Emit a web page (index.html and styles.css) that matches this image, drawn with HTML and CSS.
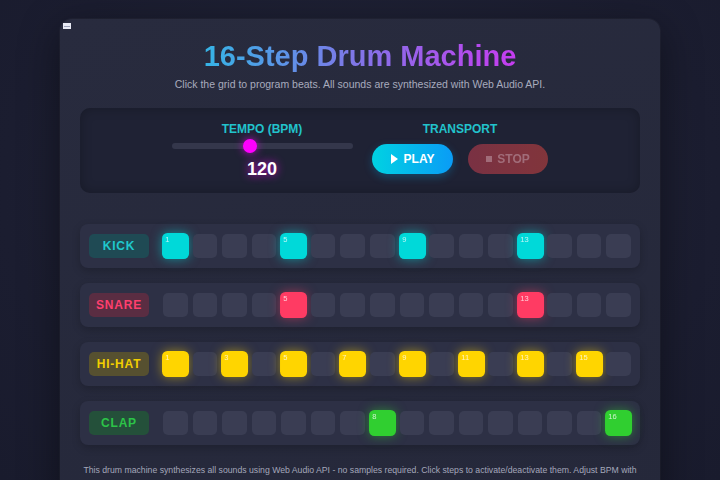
FILE: index.html
```html
<!DOCTYPE html>
<html>
<head>
<meta charset="utf-8">
<title>16-Step Drum Machine</title>
<link rel="stylesheet" href="styles.css">
</head>
<body>
<div class="card">
  <svg class="corner-icon" width="8" height="6" viewBox="0 0 8 6"><rect x="0" y="0" width="8" height="6" fill="#e8eaf4"/><rect x="1" y="3" width="6" height="1" fill="#9aa0b8"/></svg>
  <h1 class="title">16-Step Drum Machine</h1>
  <p class="subtitle">Click the grid to program beats. All sounds are synthesized with Web Audio API.</p>

  <div class="controls">
    <div class="group tempo">
      <div class="group-label">TEMPO (BPM)</div>
      <div class="slider"><div class="track"></div><div class="thumb"></div></div>
      <div class="bpm">120</div>
    </div>
    <div class="group transport">
      <div class="group-label">TRANSPORT</div>
      <div class="buttons">
        <button class="btn play"><span class="tri"></span>PLAY</button>
        <button class="btn stop"><span class="sq"></span>STOP</button>
      </div>
    </div>
  </div>

  <div class="tracks">
    <div class="track-row kick">
      <div class="label">KICK</div>
      <div class="steps">
        <div class="step on"><span>1</span></div><div class="step"></div><div class="step"></div><div class="step"></div>
        <div class="step on"><span>5</span></div><div class="step"></div><div class="step"></div><div class="step"></div>
        <div class="step on"><span>9</span></div><div class="step"></div><div class="step"></div><div class="step"></div>
        <div class="step on"><span>13</span></div><div class="step"></div><div class="step"></div><div class="step"></div>
      </div>
    </div>
    <div class="track-row snare">
      <div class="label">SNARE</div>
      <div class="steps">
        <div class="step"></div><div class="step"></div><div class="step"></div><div class="step"></div>
        <div class="step on"><span>5</span></div><div class="step"></div><div class="step"></div><div class="step"></div>
        <div class="step"></div><div class="step"></div><div class="step"></div><div class="step"></div>
        <div class="step on"><span>13</span></div><div class="step"></div><div class="step"></div><div class="step"></div>
      </div>
    </div>
    <div class="track-row hihat">
      <div class="label">HI-HAT</div>
      <div class="steps">
        <div class="step on"><span>1</span></div><div class="step"></div><div class="step on"><span>3</span></div><div class="step"></div>
        <div class="step on"><span>5</span></div><div class="step"></div><div class="step on"><span>7</span></div><div class="step"></div>
        <div class="step on"><span>9</span></div><div class="step"></div><div class="step on"><span>11</span></div><div class="step"></div>
        <div class="step on"><span>13</span></div><div class="step"></div><div class="step on"><span>15</span></div><div class="step"></div>
      </div>
    </div>
    <div class="track-row clap">
      <div class="label">CLAP</div>
      <div class="steps">
        <div class="step"></div><div class="step"></div><div class="step"></div><div class="step"></div>
        <div class="step"></div><div class="step"></div><div class="step"></div><div class="step on"><span>8</span></div>
        <div class="step"></div><div class="step"></div><div class="step"></div><div class="step"></div>
        <div class="step"></div><div class="step"></div><div class="step"></div><div class="step on"><span>16</span></div>
      </div>
    </div>
  </div>

  <p class="info">This drum machine synthesizes all sounds using Web Audio API - no samples required. Click steps to activate/deactivate them. Adjust BPM with the slider. Press Play to start the sequencer.</p>
</div>
</body>
</html>
```
FILE: styles.css
```css
* { box-sizing: border-box; }
html, body { margin: 0; padding: 0; }
body {
  background: radial-gradient(ellipse at 50% 40%, #222539 0%, #1b1d30 70%, #191b2d 100%);
  font-family: "Liberation Sans", Arial, sans-serif;
  color: #e0e2ee;
  height: 480px;
  overflow: hidden;
}
.card {
  position: relative;
  width: 600px;
  margin: 19px auto 0;
  padding: 20px 20px 20px;
  background: linear-gradient(160deg, #282b3e 0%, #25283a 100%);
  border-radius: 12px;
  box-shadow: 0 10px 40px rgba(0,0,0,0.45), 0 0 0 1px rgba(255,255,255,0.03);
}
.corner-icon { position: absolute; left: 3px; top: 4px; display: block; }
.title {
  margin: 0 auto;
  width: fit-content;
  white-space: nowrap;
  text-align: center;
  font-size: 29px;
  line-height: 34px;
  font-weight: bold;
  background: linear-gradient(90deg, #35b4e6 0%, #8a6ee8 55%, #c63cf0 100%);
  -webkit-background-clip: text;
  background-clip: text;
  color: transparent;
}
.subtitle {
  margin: 4px 0 0;
  text-align: center;
  font-size: 10.5px;
  line-height: 14px;
  color: #a8abbd;
}
.controls {
  margin-top: 17px;
  background: #1f2234;
  border-radius: 10px;
  padding: 14px 0 13px;
  display: flex;
  justify-content: center;
  gap: 19px;
  box-shadow: inset 0 0 12px rgba(0,0,0,0.25);
}
.group { display: flex; flex-direction: column; align-items: center; }
.group-label {
  font-size: 12px;
  line-height: 14px;
  font-weight: bold;
  color: #22c3cc;
}
.tempo { width: 181px; }
.slider { position: relative; width: 181px; height: 14px; margin-top: 3px; }
.slider .track {
  position: absolute; left: 0; right: 0; top: 4px; height: 6px;
  border-radius: 3px; background: #34374b;
}
.slider .thumb {
  position: absolute; left: 71px; top: 0; width: 14px; height: 14px;
  border-radius: 50%; background: #ff00ff;
  box-shadow: 0 0 8px rgba(255,0,255,0.7);
}
.bpm {
  margin-top: 5px;
  font-size: 18px;
  line-height: 22px;
  font-weight: bold;
  color: #ffffff;
  text-shadow: 0 0 8px rgba(255,0,255,0.8);
}
.transport { width: 177px; }
.buttons { display: flex; gap: 15px; margin-top: 8px; }
.btn {
  width: 81px; height: 30px;
  border: none; border-radius: 15px;
  font-family: "Liberation Sans", Arial, sans-serif;
  font-size: 12px; font-weight: bold;
  display: flex; align-items: center; justify-content: center; gap: 4px;
  padding: 0;
}
.play {
  background: linear-gradient(90deg, #00d2e2 0%, #0a9cf6 100%);
  color: #ffffff;
  box-shadow: 0 3px 8px rgba(0,160,230,0.3);
}
.tri {
  width: 0; height: 0;
  border-left: 7px solid #ffffff;
  border-top: 5px solid transparent;
  border-bottom: 5px solid transparent;
  margin-right: 2px;
}
.stop {
  width: 80px;
  background: linear-gradient(90deg, #8a3446 0%, #93393d 100%);
  color: #b87a86;
  opacity: 0.85;
}
.sq { width: 6px; height: 6px; background: #b87a86; margin-right: 1px; }

.tracks { margin-top: 31px; display: flex; flex-direction: column; gap: 15px; }
.track-row {
  display: flex; align-items: center; gap: 14px;
  padding: 10px 9px;
  background: #2d3045;
  border-radius: 8px;
  box-shadow: 0 3px 8px rgba(0,0,0,0.2);
}
.label {
  width: 60px; height: 24px;
  border-radius: 5px;
  font-size: 12px; font-weight: bold; letter-spacing: 0.8px;
  display: flex; align-items: center; justify-content: center;
}
.kick .label { color: #1fc8cc; background: #1f4a54; }
.snare .label { color: #ff3f6e; background: #5a2d42; }
.hihat .label { color: #f2cf00; background: #565030; }
.clap .label { color: #2cc448; background: #24503a; }
.steps { flex: 1; display: flex; gap: 5px; }
.step {
  flex: 1; height: 24px;
  border-radius: 5px;
  background: #3a3d53;
  position: relative;
}
.step span {
  position: absolute; left: 3px; top: 2px;
  font-size: 7px; line-height: 8px;
  color: rgba(255,255,255,0.75);
}
.step.on { transform: scale(1.08); }
.kick .step.on { background: #00d9d9; box-shadow: 0 0 10px rgba(0,217,217,0.55); }
.snare .step.on { background: #ff3b63; box-shadow: 0 0 10px rgba(255,59,99,0.5); }
.hihat .step.on { background: #ffd500; box-shadow: 0 0 10px rgba(255,213,0,0.5); }
.clap .step.on { background: #30cf30; box-shadow: 0 0 10px rgba(48,207,48,0.5); }

.info {
  margin: 18px 0 0;
  text-align: center;
  font-size: 8.7px;
  line-height: 15px;
  color: #a4a7ba;
}
```
